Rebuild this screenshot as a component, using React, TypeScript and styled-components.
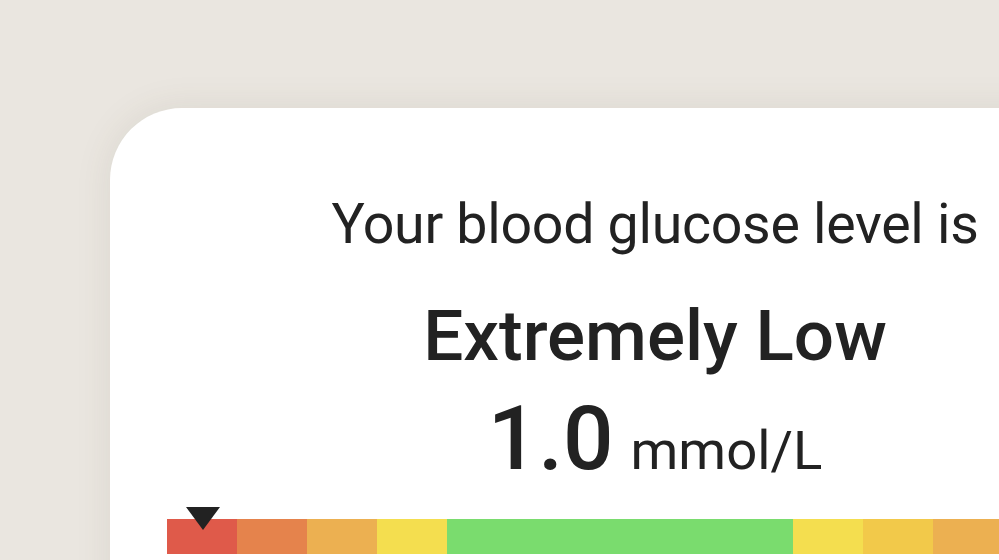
import React from 'react'
import styled, { createGlobalStyle } from 'styled-components'

const GlobalStyle = createGlobalStyle`
  html, body {
    margin: 0;
    padding: 0;
    background: #eae6e0;
    overflow: hidden;
  }
  body {
    font-family: Roboto, 'Liberation Sans', sans-serif;
    color: #222;
  }
`

const Page = styled.div`
  width: 999px;
  height: 560px;
  padding: 108px 0 0 110px;
  box-sizing: border-box;
`

const Card = styled.div`
  width: 1090px;
  height: 600px;
  background: #fff;
  border-radius: 72px;
  box-shadow: 0 0 36px rgba(90, 75, 50, 0.1);
  padding: 89px 57px 0;
  box-sizing: border-box;
  display: flex;
  flex-direction: column;
  align-items: center;
`

const Intro = styled.div`
  font-size: 55.5px;
  line-height: 1;
  font-weight: 400;
  letter-spacing: -0.3px;
`

const Status = styled.div`
  margin-top: 47px;
  font-size: 71px;
  line-height: 1;
  font-weight: 500;
`

const Reading = styled.div`
  margin-top: 23px;
  display: flex;
  align-items: baseline;
  gap: 17px;
`

const Value = styled.span`
  font-size: 89px;
  line-height: 1;
  font-weight: 500;
`

const Unit = styled.span`
  font-size: 54.5px;
  line-height: 1;
`

const Scale = styled.div`
  position: relative;
  align-self: stretch;
  margin-top: 36px;
  display: flex;
  height: 35px;
`

const Segment = styled.div<{ $color: string; $wide?: boolean }>`
  background: ${p => p.$color};
  width: ${p => (p.$wide ? 'auto' : '70px')};
  flex: ${p => (p.$wide ? '1' : 'none')};
`

const Marker = styled.div`
  position: absolute;
  top: -12px;
  width: 0;
  height: 0;
  border-left: 17px solid transparent;
  border-right: 17px solid transparent;
  border-top: 23px solid #222;
  transform: translateX(-50%);
`

const segments = [
  { color: '#df5a4a' },
  { color: '#e5834c' },
  { color: '#ecb051' },
  { color: '#f4de4f' },
  { color: '#7adc6e', wide: true },
  { color: '#f4de4f' },
  { color: '#f2c94a' },
  { color: '#ecb051' },
  { color: '#e5834c' },
  { color: '#df5a4a' },
]

const App = () => {
  const markerLeft = 36
  return (
    <>
      <GlobalStyle />
      <Page>
        <Card>
          <Intro>Your blood glucose level is</Intro>
          <Status>Extremely Low</Status>
          <Reading>
            <Value>1.0</Value>
            <Unit>mmol/L</Unit>
          </Reading>
          <Scale>
            {segments.map((s, i) => (
              <Segment key={i} $color={s.color} $wide={s.wide} />
            ))}
            <Marker style={{ left: markerLeft }} />
          </Scale>
        </Card>
      </Page>
    </>
  )
}

export default App
